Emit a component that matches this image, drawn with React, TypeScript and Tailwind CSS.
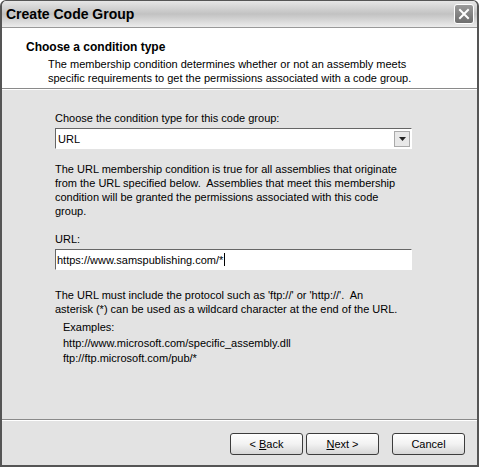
const font = { fontFamily: '"Liberation Sans", Arial, sans-serif' };

const Button = ({ children }: { children: React.ReactNode }) => (
  <button className="h-[22px] w-[73px] rounded-[3px] border border-[#3c3c3c] bg-gradient-to-b from-white via-[#f2f2f2] to-[#d6d6d6] text-[11px] text-black">
    {children}
  </button>
);

export default function App() {
  return (
    <div className="w-[479px] h-[467px] bg-white" style={font}>
      <div className="flex h-full w-full flex-col rounded-t-[6px] border-x-2 border-b-2 border-t border-[#555] bg-[#e3e3e3]">
        {/* title bar */}
        <div className="flex h-[27px] items-center justify-between rounded-t-[5px] border-b border-[#999] bg-gradient-to-b from-[#e6e6e6] via-[#c2c2c2] to-[#ececec] pl-[4px] pr-[3px]">
          <span className="text-[14px] font-bold text-black">Create Code Group</span>
          <div className="flex h-[20px] w-[20px] items-center justify-center rounded-[3px] border border-white bg-gradient-to-b from-[#9a9a9a] to-[#6e6e6e]">
            <svg width="12" height="12" viewBox="0 0 12 12">
              <path d="M2 2 L10 10 M10 2 L2 10" stroke="white" strokeWidth="2" strokeLinecap="square" />
            </svg>
          </div>
        </div>

        {/* header */}
        <div className="h-[61px] border-b border-[#8a8a8a] bg-white pl-[24px] pt-[12px] shadow-[0_1px_0_#fff]">
          <div className="text-[12px] font-bold leading-[15px] text-black">Choose a condition type</div>
          <div className="pl-[22px] pt-[2px] text-[11px] leading-[14px] text-black">
            <div>The membership condition determines whether or not an assembly meets</div>
            <div>specific requirements to get the permissions associated with a code group.</div>
          </div>
        </div>

        {/* body */}
        <div className="flex flex-1 flex-col pl-[53px] pr-[65px] pt-[22px] text-[11px] leading-[14px] text-black">
          <div>Choose the condition type for this code group:</div>
          <div className="mt-[3px] flex h-[21px] items-center border-t border-l border-[#666] border-r border-b border-r-white border-b-white bg-white pl-[2px]">
            <span className="flex-1">URL</span>
            <div className="mr-[1px] flex h-[16px] w-[16px] items-center justify-center border border-[#aaa] bg-[#e8e8e8]">
              <svg width="7" height="4" viewBox="0 0 7 4"><path d="M0 0 H7 L3.5 4 Z" fill="#222" /></svg>
            </div>
          </div>

          <div className="mt-[13px]">
            <div>The URL membership condition is true for all assemblies that originate</div>
            <div>from the URL specified below.&nbsp; Assemblies that meet this membership</div>
            <div>condition will be granted the permissions associated with this code</div>
            <div>group.</div>
          </div>

          <div className="mt-[14px]">URL:</div>
          <div className="mt-[3px] flex h-[21px] items-center border-t border-l border-[#666] border-r border-b border-r-white border-b-white bg-white pl-[1px]">
            <span>https://www.samspublishing.com/*</span>
            <span className="ml-[1px] h-[13px] w-px bg-black" />
          </div>

          <div className="mt-[19px] leading-[13.5px]">
            <div>The URL must include the protocol such as 'ftp://' or 'http://'.&nbsp; An</div>
            <div>asterisk (*) can be used as a wildcard character at the end of the URL.</div>
          </div>
          <div className="mt-[4px] pl-[8px] leading-[15.5px]">
            <div>Examples:</div>
            <div>http://www.microsoft.com/specific_assembly.dll</div>
            <div>ftp://ftp.microsoft.com/pub/*</div>
          </div>
        </div>

        {/* footer */}
        <div className="flex h-[46px] items-start justify-end gap-[3px] border-t border-[#8a8a8a] pr-[12px] pt-[13px] shadow-[inset_0_1px_0_#fff]">
          <Button>
            &lt; <u>B</u>ack
          </Button>
          <Button>
            <u>N</u>ext &gt;
          </Button>
          <div className="w-[7px]" />
          <Button>Cancel</Button>
        </div>
      </div>
    </div>
  );
}
